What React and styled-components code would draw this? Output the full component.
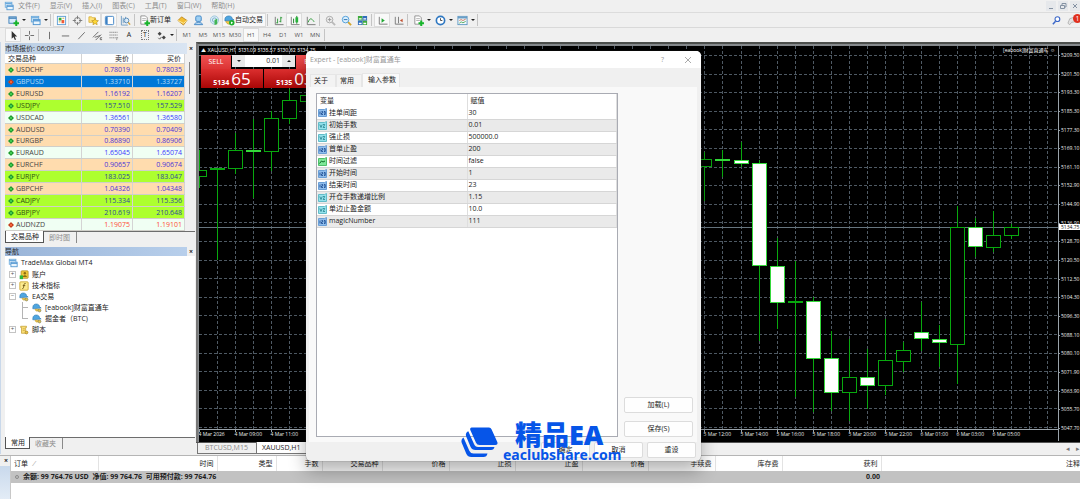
import styled, { createGlobalStyle, css } from "styled-components";

const menus = ["文件(F)", "显示(V)", "插入(I)", "图表(C)", "工具(T)", "窗口(W)", "帮助(H)"];

const timeframes = ["M1", "M5", "M15", "M30", "H1", "H4", "D1", "W1", "MN"];

const quotes = [
  { symbol: "USDCHF", bid: "0.78019", ask: "0.78035", tone: "peach" },
  { symbol: "GBPUSD", bid: "1.33710", ask: "1.33727", tone: "selected", down: true },
  { symbol: "EURUSD", bid: "1.16192", ask: "1.16207", tone: "peach" },
  { symbol: "USDJPY", bid: "157.510", ask: "157.529", tone: "lime" },
  { symbol: "USDCAD", bid: "1.36561", ask: "1.36580", tone: "mint" },
  { symbol: "AUDUSD", bid: "0.70390", ask: "0.70409", tone: "peach" },
  { symbol: "EURGBP", bid: "0.86890", ask: "0.86906", tone: "peach" },
  { symbol: "EURAUD", bid: "1.65045", ask: "1.65074", tone: "mint" },
  { symbol: "EURCHF", bid: "0.90657", ask: "0.90674", tone: "peach" },
  { symbol: "EURJPY", bid: "183.025", ask: "183.047", tone: "lime" },
  { symbol: "GBPCHF", bid: "1.04326", ask: "1.04348", tone: "peach" },
  { symbol: "CADJPY", bid: "115.334", ask: "115.356", tone: "lime" },
  { symbol: "GBPJPY", bid: "210.619", ask: "210.648", tone: "lime" },
  { symbol: "AUDNZD", bid: "1.19075", ask: "1.19101", tone: "falling", down: true },
];

const tones = {
  peach: { bg: "#ffdcae", text: "#3f3f3f", price: "#4a35d8" },
  selected: { bg: "#0078d7", text: "#b9dcf7", price: "#b9dcf7" },
  lime: { bg: "#adff2f", text: "#2e4f10", price: "#2c4a9a" },
  mint: { bg: "#f0fff3", text: "#454545", price: "#3a3aff" },
  falling: { bg: "#f0fff3", text: "#454545", price: "#ff4b33" },
};

const treeItems = [
  { label: "TradeMax Global MT4", icon: "windows", level: 0 },
  { label: "账户", icon: "account", level: 1, toggle: "+" },
  { label: "技术指标", icon: "indicator", level: 1, toggle: "+" },
  { label: "EA交易", icon: "expert", level: 1, toggle: "-" },
  { label: "[eabook]财富直通车", icon: "expert", level: 2 },
  { label: "掘金者（BTC)", icon: "expert", level: 2, last: true },
  { label: "脚本", icon: "script", level: 1, toggle: "+", last: true },
];

const params = [
  { name: "挂单间距", value: "30", type: "int" },
  { name: "初始手数", value: "0.01", type: "double" },
  { name: "强止损", value: "500000.0", type: "double" },
  { name: "首单止盈", value: "200", type: "int" },
  { name: "时间过滤", value: "false", type: "bool" },
  { name: "开始时间", value: "1", type: "int" },
  { name: "结束时间", value: "23", type: "int" },
  { name: "开仓手数递增比例", value: "1.15", type: "double" },
  { name: "单边止盈金额", value: "10.0", type: "double" },
  { name: "magicNumber", value: "111", type: "int" },
];

const orderColumns = [
  { label: "时间", width: 119 },
  { label: "类型", width: 59 },
  { label: "手数", width: 46 },
  { label: "交易品种", width: 60 },
  { label: "价格", width: 67 },
  { label: "止损", width: 66 },
  { label: "止盈", width: 67 },
  { label: "价格", width: 66 },
  { label: "手续费", width: 67 },
  { label: "库存费", width: 67 },
  { label: "获利", width: 99 },
];

const prices = [
  "5209.50", "5201.50", "5193.30", "5185.30", "5177.30", "5169.10", "5161.10",
  "5152.90", "5144.90", "5136.90", "5128.70", "5120.50", "5112.50", "5104.30",
  "5096.30", "5088.10", "5080.10", "5071.90", "5063.90", "5055.70", "5047.70",
];

const times = [
  [0, "4 Mar 2026"], [2, "4 Mar 09:00"], [4, "4 Mar 11:00"],
  [28, "5 Mar 12:00"], [30, "5 Mar 14:00"], [32, "5 Mar 16:00"],
  [34, "5 Mar 18:00"], [36, "5 Mar 20:00"], [38, "5 Mar 22:00"],
  [40, "6 Mar 01:00"], [42, "6 Mar 03:00"], [44, "6 Mar 05:00"],
];

// [bar index, wick top, body top, body bottom, wick bottom, filled]
const candles = [
  [0, 104, 124, 131, 142, 0],
  [1, 122, 122, 124, 214, 0],
  [2, 87, 104, 123, 128, 0],
  [3, 73, 104, 106, 152, 1],
  [4, 65, 72, 106, 125, 0],
  [5, 43, 54, 73, 78, 0],
  [6, 44, 49, 56, 62, 0],
  [28, 106, 113, 121, 155, 0],
  [29, 104, 113, 115, 131, 1],
  [30, 96, 114, 118, 121, 1],
  [31, 114, 117, 220, 295, 1],
  [32, 192, 220, 257, 283, 1],
  [33, 215, 255, 257, 351, 0],
  [34, 251, 255, 313, 366, 1],
  [35, 285, 312, 347, 365, 1],
  [36, 293, 331, 347, 375, 0],
  [37, 303, 331, 340, 363, 1],
  [38, 273, 314, 340, 349, 0],
  [39, 296, 304, 316, 326, 0],
  [40, 256, 286, 293, 305, 1],
  [41, 279, 293, 297, 321, 1],
  [42, 160, 181, 299, 338, 0],
  [43, 172, 181, 201, 211, 1],
  [44, 165, 189, 202, 206, 0],
  [45, 178, 181, 190, 193, 0],
];

const barX = (i) => Math.round(i * 18.05) + 0.5;

const plus = <path d="M9 6v6M6 9h6" stroke="#17b52a" strokeWidth="2.2" />;

const drawings = {
  windows: (
    <>
      <rect x="1.5" y="1.5" width="8" height="6" fill="#e9f5fd" stroke="#6aa9dc" />
      <path d="M1.5 3h8" stroke="#6aa9dc" strokeWidth="1.4" />
      <rect x="3.5" y="5" width="7.5" height="5.5" fill="#e9f5fd" stroke="#4c93d0" />
      <path d="M3.5 6.3h7.5" stroke="#4c93d0" strokeWidth="1.4" />
    </>
  ),
  newChart: (
    <>
      <rect x="1" y="2" width="8" height="7" fill="#d6eafa" stroke="#3f7fb8" />
      <path d="M1 3.4h8" stroke="#3f7fb8" strokeWidth="1.5" />
      {plus}
    </>
  ),
  market: (
    <>
      <rect x="1.5" y="1.5" width="9" height="9" fill="#fff" stroke="#5e9fd4" />
      <path d="M3 3h3v3H3z" fill="#2fae3a" />
      <path d="M6 5.5h3v3.5H6z" fill="#ef5a36" />
      <path d="M3 7.5h2M7 3.5h2" stroke="#c9a030" />
    </>
  ),
  target: (
    <>
      <circle cx="6" cy="6" r="3.3" fill="none" stroke="#777" />
      <path d="M6 .8v3.6M6 7.6v3.6M.8 6h3.6M7.6 6h3.6" stroke="#777" />
    </>
  ),
  star: (
    <>
      <path d="M1 2h3l1 1h3v5H1z" fill="#ffe27a" stroke="#d1a62b" strokeWidth=".8" />
      <path d="m7.7 3.6 1.1 2.3 2.6.3-1.9 1.8.5 2.6-2.3-1.3-2.3 1.3.5-2.6L4 6.2l2.6-.3z" fill="#ffd935" stroke="#b98f1b" strokeWidth=".7" />
    </>
  ),
  terminal: (
    <>
      <rect x="1.5" y="1.5" width="9" height="9" rx="1" fill="#fff" stroke="#3c81c4" />
      <path d="M2 2h2v8H2z" fill="#3c81c4" />
    </>
  ),
  tester: (
    <>
      <path d="M1.5 1v10h7M3.5 3v6M6 2v6" stroke="#6d9cc4" fill="none" />
      <circle cx="7" cy="6" r="2.6" fill="#d9ecfa" fillOpacity=".8" stroke="#5387b6" />
      <path d="m9 8 2 2.5" stroke="#cf9e34" strokeWidth="1.5" />
    </>
  ),
  order: (
    <>
      <path d="M2 1h5l2 2v7H2z" fill="#fff" stroke="#777" strokeWidth=".8" />
      <path d="M3.5 4h4M3.5 6h4" stroke="#999" strokeWidth=".8" />
      {plus}
    </>
  ),
  editor: (
    <>
      <path d="m1 6 4-4 6 4-4 5z" fill="#f2bd34" stroke="#b47c12" strokeWidth=".8" />
      <path d="m1 6 6 3 4-3" stroke="#fff0a8" fill="none" />
    </>
  ),
  person: (
    <>
      <rect x="3" y="1" width="6" height="6" rx="1.5" fill="#9ed0f4" stroke="#3f84c4" />
      <path d="M1.5 10.5c0-3 9-3 9 0z" fill="#c8e4f8" stroke="#3f84c4" />
    </>
  ),
  signal: (
    <>
      <circle cx="6" cy="5.5" r="4.5" fill="#d9ecf6" stroke="#9cc4dc" />
      <circle cx="6" cy="5.5" r="2.3" fill="none" stroke="#7fb0cc" />
      <path d="M6 5.5 9 4v6l-3 1z" fill="#42b553" />
    </>
  ),
  expert: (
    <>
      <path d="M1 5c0-5 8-5 8-.5L11 6 1 7z" fill="#4fa5df" stroke="#2677b0" strokeWidth=".7" />
      <path d="M3.5 7.5c1 3 4 3 5 0z" fill="#f3c944" stroke="#b08c22" strokeWidth=".6" />
      <circle cx="9" cy="9" r="1.7" fill="#e8c44a" stroke="#7b7b55" strokeWidth=".8" />
    </>
  ),
  autoTrade: (
    <>
      <path d="M1 4.5c0-4.500 8-4.500 8-.5l2 1.500L1 6.5z" fill="#4fa5df" stroke="#2677b0" strokeWidth=".7" />
      <path d="M2 7c1 4 6 4 7 0z" fill="#f3c944" stroke="#b08c22" strokeWidth=".6" />
      <circle cx="8.5" cy="8.5" r="3" fill="#1eaf2d" />
      <path d="M7.6 7v3L10 8.500z" fill="#fff" />
    </>
  ),
  bars: (
    <>
      <path d="M2.5 2v8.500h9" stroke="#777" fill="none" />
      <path d="M5 4v5M3.500 8.500H5M8.500 2v6M8.500 3H10M7 7h1.500" stroke="#2d9a38" fill="none" />
    </>
  ),
  candle: (
    <>
      <path d="M2.5 2v8.500h9" stroke="#777" fill="none" />
      <path d="M5 4v5M8.500 1v8.500" stroke="#157b22" />
      <path d="M7 2.500h3V8H7z" fill="#28b33b" />
    </>
  ),
  line: (
    <>
      <path d="M2.5 2v8.500h9" stroke="#777" fill="none" />
      <path d="M3.500 8c1.500-5 3.500-5 6.500-.5" stroke="#2d9a38" fill="none" />
    </>
  ),
  zoomIn: (
    <>
      <path d="m7.5 7.5 3.500 3.500" stroke="#b9b9b9" strokeWidth="2" />
      <circle cx="5" cy="5" r="3.600" fill="#eee" stroke="#a9a9a9" />
      <path d="M3 5h4M5 3v4" stroke="#999" />
    </>
  ),
  zoomOut: (
    <>
      <path d="m7.5 7.5 3.500 3.500" stroke="#d4a62c" strokeWidth="2" />
      <circle cx="5" cy="5" r="3.600" fill="#d9efff" stroke="#4d9bd6" />
      <path d="M3 5h4" stroke="#2a70ab" />
    </>
  ),
  tile: (
    <>
      <path d="M1 1h5v5H1zM6 6h5v5H6z" fill="#3eaa3c" />
      <path d="M6 1h5v5H6zM1 6h5v5H1z" fill="#2f6dbb" />
      <path d="M2 3.500h3v1.500H2zM7 3.500h3v1.500H7zM2 8.500h3V10H2zM7 8.500h3V10H7z" fill="#fff" />
    </>
  ),
  scroll: (
    <>
      <path d="M2.500 2v8h9" stroke="#777" fill="none" />
      <path d="M5 3.500v5L8.500 6z" fill="#22a834" />
    </>
  ),
  shift: (
    <>
      <path d="M2.500 2v8h9M6 2v7" stroke="#777" fill="none" />
      <path d="M10.500 4v4L7.500 6z" fill="#c2502f" />
    </>
  ),
  clock: (
    <>
      <circle cx="6" cy="6" r="4.500" fill="#fff" stroke="#2f78c2" strokeWidth="1.800" />
      <path d="M6 3.500V6h2" stroke="#444" fill="none" />
    </>
  ),
  template: (
    <>
      <rect x="1" y="1.500" width="10" height="9" fill="#f2f8fc" stroke="#5f97c2" />
      <path d="M1 3h10" stroke="#5f97c2" strokeWidth="1.500" />
      <path d="m2.500 6 2-1 2 1 3-1.500" stroke="#c2502f" fill="none" strokeWidth=".8" />
      <path d="m2.500 9 2-1.500 2 1 3-1.500" stroke="#2d9a38" fill="none" strokeWidth=".8" />
    </>
  ),
  cursor: <path d="M4 1v8.500l2-2 1.500 3.500 1.300-.6L7.300 7H10z" fill="#333" />,
  cross: <path d="M6 1v4M6 7v4M1 6h4M7 6h4" stroke="#666" />,
  vline: <path d="M6 2v8" stroke="#666" />,
  hline: <path d="M2 6.500h8" stroke="#666" />,
  trend: <path d="m2.500 10 7-7.500" stroke="#666" />,
  channel: (
    <>
      <path d="m1 8 6-6M4 11l6-6M3 8l6-2" stroke="#666" />
      <path d="M9 8.500h2M9 10.500h2M9 8.500v2" stroke="#666" />
    </>
  ),
  fib: <path d="M1.500 2.500h9M1.500 5.500h9M1.500 8.500h7M9.500 8v3M9.500 8.500H11" stroke="#888" strokeDasharray="1.500 .5" />,
  arrows: (
    <>
      <path d="m4 2 2.200 2.200L4 6.400 1.800 4.200z" fill="#444" />
      <path d="m8.500 6 2.200 2.200-2.200 2.200-2.200-2.200z" fill="#444" />
      <path d="m2.500 8.500 1.500 1.500 2-2.500" stroke="#555" fill="none" />
    </>
  ),
  account: (
    <>
      <rect x="2.500" y="1" width="8.500" height="9" rx="1" fill="#f0c83c" stroke="#a8841a" strokeWidth=".8" />
      <circle cx="7" cy="4" r="1.500" fill="#8d6d10" />
      <path d="M4.500 8.500c0-3 5-3 5 0z" fill="#8d6d10" />
      <path d="M.8 6.500h4v4.500h-4z" fill="#2cb83a" />
    </>
  ),
  indicator: (
    <>
      <rect x="1" y="1" width="10" height="10" rx="1" fill="#fbe98e" stroke="#c9a42f" />
      <path d="M8 3c-2-.5-2 1-2.300 3S5.500 9.500 4 9M4.500 5.500h3" stroke="#6b5312" fill="none" />
    </>
  ),
  script: (
    <>
      <path d="M2 1.500h7v1.500H8v5h1.500v2H3V3H2z" fill="#f9dd76" stroke="#be9727" strokeWidth=".8" />
      <path d="M4.500 4.500H7M4.500 6.500H7" stroke="#be9727" strokeWidth=".7" />
      <circle cx="9" cy="9" r="1.700" fill="#e8c44a" stroke="#a88220" strokeWidth=".8" />
    </>
  ),
  search: (
    <>
      <circle cx="7" cy="4.500" r="2.600" fill="#fff" stroke="#3b67c8" strokeWidth="1.200" />
      <path d="M5 6.800 2 10" stroke="#3b67c8" strokeWidth="1.600" />
    </>
  ),
  chat: <path d="m1 9 2-5 6-2 2 5-6 1-2 2.500z" fill="#e4e4e4" stroke="#a5a5a5" strokeWidth=".8" />,
};

function Icon({ name, size = 11 }) {
  return (
    <svg width={size} height={size} viewBox="0 0 12 12" fill="none" aria-hidden="true">
      {drawings[name]}
    </svg>
  );
}

function Tool({ icon, label, pressed, caret, children }) {
  return (
    <>
      <ToolButton type="button" aria-label={label} $pressed={pressed} $wide={Boolean(children)}>
        {icon && <Icon name={icon} />}
        {children}
      </ToolButton>
      {caret && <Caret aria-hidden="true" />}
    </>
  );
}

function Toolbars() {
  return (
    <header>
      <MenuBar>
        <Icon name="windows" size={10} />
        {menus.map((menu) => (
          <button type="button" key={menu}>{menu}</button>
        ))}
        <WindowControls>
          <button type="button" aria-label="最小化">
            <svg width="8" height="8"><path d="M2 6.500h4" stroke="#8592a3" /></svg>
          </button>
          <button type="button" aria-label="还原">
            <svg width="8" height="8" fill="none"><path d="M1.500 3.500h4v3h-4zM3 3V1.500h4V5H6" stroke="#8592a3" /></svg>
          </button>
          <button type="button" aria-label="关闭">
            <svg width="8" height="8"><path d="m2 2 4 4M6 2 2 6" stroke="#8592a3" /></svg>
          </button>
        </WindowControls>
      </MenuBar>
      <ToolRow>
        <Tool icon="newChart" label="新图表" caret />
        <Tool icon="windows" label="配置文件" caret />
        <Divider />
        <Tool icon="market" label="市场报价" pressed />
        <Tool icon="target" label="数据窗口" />
        <Tool icon="star" label="导航" pressed />
        <Tool icon="terminal" label="终端" pressed />
        <Tool icon="tester" label="策略测试" />
        <Divider />
        <Tool icon="order" label="新订单">新订单</Tool>
        <Tool icon="editor" label="编辑器" />
        <Tool icon="person" label="社区" />
        <Tool icon="signal" label="信号" />
        <Tool icon="autoTrade" label="自动交易" pressed>自动交易</Tool>
        <Divider />
        <Tool icon="bars" label="柱状图" />
        <Tool icon="candle" label="阴阳烛" pressed />
        <Tool icon="line" label="折线图" />
        <Divider />
        <Tool icon="zoomIn" label="放大" />
        <Tool icon="zoomOut" label="缩小" />
        <Tool icon="tile" label="平铺" />
        <Divider />
        <Tool icon="scroll" label="自动滚动" pressed />
        <Tool icon="shift" label="图表平移" />
        <Divider />
        <Tool icon="order" label="指标" caret />
        <Tool icon="clock" label="时段" caret />
        <Tool icon="template" label="模板" caret />
        <Divider />
        <ToolEnd>
          <Tool icon="search" label="搜索" />
          <Tool icon="chat" label="消息" />
          <Badge>1</Badge>
        </ToolEnd>
      </ToolRow>
      <ToolRow>
        <Tool icon="cursor" label="光标" pressed />
        <Tool icon="cross" label="十字线" />
        <Divider />
        <Tool icon="vline" label="垂直线" />
        <Tool icon="hline" label="水平线" />
        <Tool icon="trend" label="趋势线" />
        <Tool icon="channel" label="通道" />
        <Tool icon="fib" label="斐波那契" />
        <ToolButton type="button">A</ToolButton>
        <ToolButton type="button"><BoxedLetter>T</BoxedLetter></ToolButton>
        <Tool icon="arrows" label="箭头" caret />
        <Divider />
        {timeframes.map((frame) => (
          <ToolButton type="button" key={frame} $small $pressed={frame === "H1"}>{frame}</ToolButton>
        ))}
        <Divider />
      </ToolRow>
    </header>
  );
}

function MarketWatch() {
  return (
    <section>
      <PanelTitle $light>
        市场报价: 06:09:37
        <CloseButton type="button" aria-label="关闭">×</CloseButton>
      </PanelTitle>
      <QuoteArea>
        <QuoteTable>
          <colgroup>
            <col />
            <col width="51" />
            <col width="52" />
          </colgroup>
          <thead>
            <tr>
              <th>交易品种</th>
              <th>卖价</th>
              <th>买价</th>
            </tr>
          </thead>
          <tbody>
            {quotes.map((q) => (
              <QuoteRow key={q.symbol} $tone={tones[q.tone]}>
                <td>
                  <Marker $down={q.down} />
                  {q.symbol}
                </td>
                <td>{q.bid}</td>
                <td>{q.ask}</td>
              </QuoteRow>
            ))}
          </tbody>
        </QuoteTable>
        <ScrollTrack><ScrollThumb /></ScrollTrack>
      </QuoteArea>
      <TabStrip>
        <DockTab type="button" $active>交易品种</DockTab>
        <DockTab type="button">即时图</DockTab>
      </TabStrip>
    </section>
  );
}

function Navigator() {
  return (
    <section>
      <PanelTitle>
        导航
        <CloseButton type="button" aria-label="关闭">×</CloseButton>
      </PanelTitle>
      <Tree>
        {treeItems.map((item) => (
          <TreeItem key={item.label} $level={item.level}>
            {item.toggle && <Toggle type="button" aria-label={item.label}>{item.toggle === "+" ? "+" : "−"}</Toggle>}
            {item.level === 2 && <Branch $last={item.last} />}
            <Icon name={item.icon} size={10} />
            {item.label}
          </TreeItem>
        ))}
      </Tree>
      <TabStrip>
        <DockTab type="button" $active>常用</DockTab>
        <DockTab type="button">收藏夹</DockTab>
      </TabStrip>
    </section>
  );
}

function Chart() {
  return (
    <ChartFrame>
      <Plot>
        <svg width="100%" height="395" role="img" aria-label="XAUUSD,H1">
          <g stroke="#4f5a64" strokeDasharray="3 2">
            {prices.map((p, i) => (
              <line key={p} x1="0" x2="100%" y1={Math.round(9 + i * 18.6) + 0.5} y2={Math.round(9 + i * 18.6) + 0.5} />
            ))}
            {Array.from({ length: 47 }, (_, i) => (
              <line key={i} x1={barX(i + 1)} x2={barX(i + 1)} y1="0" y2="383" />
            ))}
          </g>
          <path d="M0 383.500h2000" stroke="#9aa3aa" />
          <path d="M0 181.500h2000" stroke="#66757f" />
          {candles.map(([i, high, top, bottom, low, filled]) => (
            <g key={i} stroke={filled ? "#35d83b" : "#08a80e"}>
              <line x1={barX(i)} x2={barX(i)} y1={high} y2={low} stroke="#08a80e" />
              <rect
                x={barX(i) - 7}
                y={top + 0.5}
                width="14"
                height={bottom - top - 1}
                fill={filled ? "#fff" : "#000"}
              />
            </g>
          ))}
          {times.map(([i, label]) => (
            <g key={label}>
              <path d={`M${barX(i)} 383v3`} stroke="#9aa3aa" />
              <TimeText x={barX(i) - 1} y="390">{label}</TimeText>
            </g>
          ))}
        </svg>
        <ChartHeading>▲ XAUUSD,H1&nbsp; 5131.09 5135.57 5130.62 5134.75</ChartHeading>
        <ExpertName>[eabook]财富直通车 ☺</ExpertName>
        <TradePanel>
          <TradeTop>
            <TradeButton type="button">SELL</TradeButton>
            <Lots>
              <button type="button" aria-label="减少"><Caret /></button>
              <input aria-label="手数" defaultValue="0.01" />
              <button type="button" aria-label="增加"><Caret $up /></button>
            </Lots>
            <TradeButton type="button">BUY</TradeButton>
          </TradeTop>
          <TradePrices>
            <TradePrice><b>5134</b>65</TradePrice>
            <TradePrice><b>5135</b>03</TradePrice>
          </TradePrices>
        </TradePanel>
      </Plot>
      <PriceAxis>
        {prices.map((p) => <span key={p}>{p}</span>)}
        <CurrentPrice>5134.75</CurrentPrice>
      </PriceAxis>
    </ChartFrame>
  );
}

function Terminal() {
  return (
    <TerminalDock>
      <TerminalSide>
        <CloseButton type="button" aria-label="关闭">×</CloseButton>
      </TerminalSide>
      <OrderTable>
        <colgroup>
          <col width="87" />
          {orderColumns.map((c, i) => <col key={i} width={c.width} />)}
          <col />
        </colgroup>
        <thead>
          <tr>
            <th>订单 <i>⁄</i></th>
            {orderColumns.map((c, i) => <th key={i}>{c.label}</th>)}
            <th>注释</th>
          </tr>
        </thead>
        <tbody>
          <tr>
            <td colSpan="11">
              <Dot />
              余额: 99 764.76 USD&nbsp; 净值: 99 764.76&nbsp; 可用预付款: 99 764.76
            </td>
            <td>0.00</td>
            <td />
          </tr>
        </tbody>
      </OrderTable>
    </TerminalDock>
  );
}

const typeIcons = {
  int: { bg: "#8fbdec", edge: "#6a9fd6", ink: "#12428a" },
  double: { bg: "#95e2ec", edge: "#62bcc8", ink: "#14727f" },
  bool: { bg: "#7fe898", edge: "#4fbf6a", ink: "#0e6c27" },
};

function TypeIcon({ type }) {
  const t = typeIcons[type];
  return (
    <svg width="9" height="9" viewBox="0 0 9 9" fill="none" aria-hidden="true">
      <path d="M.5 1.500h6l2-1v8h-8z" fill={t.bg} stroke={t.edge} />
      {type === "bool" && <path d="m1.500 6.500 2-2.500 1.500 1 2-1" stroke={t.ink} />}
      {type === "int" && <path d="M2 3.500v3M3.500 3.500h1.200v1.500H3.500v1.500h1.500M6 3.500h1.200v3H6M6 5h1.200" stroke={t.ink} strokeWidth=".8" />}
      {type === "double" && <path d="m1.800 3.500 1.200 3L4.200 3.500M5 3.500h1.700l-1.500 3H7" stroke={t.ink} strokeWidth=".7" />}
    </svg>
  );
}

function ExpertDialog() {
  return (
    <Dialog role="dialog" aria-label="Expert">
      <DialogTitle>
        Expert - [eabook]财富直通车
        <span>
          <button type="button" aria-label="帮助">?</button>
          <button type="button" aria-label="关闭">
            <svg width="8" height="8"><path d="m1 1 6 6M7 1 1 7" stroke="#aaa" /></svg>
          </button>
        </span>
      </DialogTitle>
      <DialogTabs role="tablist">
        <DialogTab type="button" role="tab">关于</DialogTab>
        <DialogTab type="button" role="tab">常用</DialogTab>
        <DialogTab type="button" role="tab" $active>输入参数</DialogTab>
      </DialogTabs>
      <DialogBody>
        <ParamFrame>
          <ParamTable>
            <colgroup>
              <col width="150" />
              <col />
            </colgroup>
            <thead>
              <tr>
                <th>变量</th>
                <th>赋值</th>
              </tr>
            </thead>
            <tbody>
              {params.map((p) => (
                <tr key={p.name}>
                  <td>
                    <Cell>
                      <TypeIcon type={p.type} />
                      {p.name}
                    </Cell>
                  </td>
                  <td>{p.value}</td>
                </tr>
              ))}
            </tbody>
          </ParamTable>
        </ParamFrame>
        <SideButtons>
          <PushButton type="button">加载(L)</PushButton>
          <PushButton type="button">保存(S)</PushButton>
        </SideButtons>
      </DialogBody>
      <DialogFooter>
        <PushButton type="button">确定</PushButton>
        <PushButton type="button">取消</PushButton>
        <PushButton type="button">重设</PushButton>
      </DialogFooter>
      <Watermark>
        <svg width="37" height="32" viewBox="0 0 37 32" aria-hidden="true">
          <g fill="#0655e8">
            <path d="M10.500.5H28q1.800 0 2.500 1.700L36.300 15q1 3-1.800 3H18.500q-2.500 0-3.500-2.300L9.300 3Q8.700 1 10.500.5z" />
            <path d="M7.300 4.200 13 17q1.200 3 4 3h16.500q-.7 3-3.500 3H14.500q-3.500 0-5-3.300L5 9q-.8-3.300 2.300-4.800z" />
            <path d="M2.500 10.500 8.300 23.700q1.200 2.800 4.200 2.800h14q-.7 3.500-4 3.500H10.300q-3.500 0-5-3.300L.8 16q-1.300-3.500 1.700-5.500z" />
          </g>
        </svg>
        <div>
          <strong>精品EA</strong>
          <span>eaclubshare.com</span>
        </div>
      </Watermark>
    </Dialog>
  );
}

export default function App() {
  return (
    <>
      <GlobalStyle />
      <Page>
        <Toolbars />
        <Workspace>
          <LeftDock>
            <MarketWatch />
            <Navigator />
          </LeftDock>
          <ChartArea>
            <Chart />
            <ChartTabs>
              <ChartTab type="button">BTCUSD,M15</ChartTab>
              <ChartTab type="button" $active>XAUUSD,H1</ChartTab>
              <ChartScroll>
                <button type="button" aria-label="向左">◂</button>
                <button type="button" aria-label="向右">▸</button>
              </ChartScroll>
            </ChartTabs>
          </ChartArea>
        </Workspace>
        <Terminal />
        <ExpertDialog />
      </Page>
    </>
  );
}

const GlobalStyle = createGlobalStyle`
  * {
    box-sizing: border-box;
  }

  body {
    margin: 0;
    background: #f0f0f0;
    color: #222;
    font-family: "Open Sans", "Noto Sans CJK SC", sans-serif;
    font-size: 7px;
    line-height: 10px;
  }

  button,
  input {
    margin: 0;
    padding: 0;
    border: 0;
    background: none;
    color: inherit;
    font: inherit;
  }

  svg {
    display: block;
    flex: none;
  }

  table {
    border-collapse: collapse;
    table-layout: fixed;
  }

  th,
  td {
    padding: 0;
    font-weight: 400;
    white-space: nowrap;
    overflow: hidden;
  }
`;

const Page = styled.div`
  position: relative;
  display: flex;
  flex-direction: column;
  min-height: 100vh;
  overflow: hidden;
`;

const MenuBar = styled.nav`
  display: flex;
  align-items: center;
  gap: 10px;
  height: 13px;
  padding-left: 4px;
  border-bottom: 1px solid #dcdcdc;
  color: #8e8e8e;

  > svg {
    margin-right: -6px;
  }
`;

const WindowControls = styled.div`
  display: flex;
  gap: 2px;
  margin-left: auto;

  button {
    padding: 1px;
    background: #e6e8eb;
  }
`;

const ToolRow = styled.div`
  display: flex;
  align-items: stretch;
  height: 15px;
  padding-left: 5px;
  border-bottom: 1px solid #d9d9d9;

  & + & {
    height: 14px;
    border-bottom: 0;
  }
`;

const ToolButton = styled.button`
  display: flex;
  align-items: center;
  justify-content: center;
  width: ${({ $wide }) => ($wide ? "auto" : "16px")};
  padding: ${({ $wide }) => ($wide ? "0 3px 0 2px" : "0")};
  color: ${({ $small }) => ($small ? "#555" : "#222")};
  font-size: ${({ $small }) => ($small ? "6px" : "7px")};

  ${({ $pressed }) =>
    $pressed &&
    css`
      background: #f9f9f9;
      box-shadow: inset 0 0 0 1px #dcdcdc;
    `}
`;

const Divider = styled.i`
  width: 1px;
  margin: 1px 2px 1px 1px;
  background: #c4c4c4;
`;

const Caret = styled.i`
  align-self: center;
  margin: 0 1px;
  border: 2px solid transparent;
  border-top-color: #222;
  border-bottom-width: 0;

  ${({ $up }) =>
    $up &&
    css`
      border-width: 0 2px 2px;
      border-bottom-color: #222;
    `}
`;

const BoxedLetter = styled.span`
  width: 8px;
  border: 1px dotted #777;
  line-height: 8px;
`;

const ToolEnd = styled.div`
  position: relative;
  display: flex;
  margin-left: auto;
`;

const Badge = styled.span`
  position: absolute;
  top: 1px;
  right: -2px;
  width: 9px;
  border-radius: 5px;
  background: #e0301e;
  color: #fff;
  line-height: 9px;
  text-align: center;
`;

const Workspace = styled.main`
  display: flex;
  padding-bottom: 1px;
`;

const LeftDock = styled.aside`
  display: flex;
  flex-direction: column;
  gap: 4px;
  flex: none;
  width: 196px;
  padding: 1px 1px 0 4px;
  border-left: 1px solid #c9d8ea;
`;

const PanelTitle = styled.h2`
  display: flex;
  justify-content: space-between;
  margin: 0;
  background: ${({ $light }) =>
    $light ? "linear-gradient(90deg, #b9cde4, #dbe6f3)" : "linear-gradient(90deg, #99b4d8, #b9d0ec)"};
  color: #2b2b2b;
  font-size: 7px;
  font-weight: 400;
  line-height: ${({ $light }) => ($light ? "11px" : "9px")};
`;

const CloseButton = styled.button`
  width: 8px;
  background: #f0f0f0;
  color: #222;
  font-weight: 700;
`;

const QuoteArea = styled.div`
  display: flex;
  background: #f0f0f0;
`;

const QuoteTable = styled.table`
  flex: 1;
  height: 177px;
  background: #fff;

  th,
  td {
    padding: 0 2px 0 0;
    border-right: 1px solid #d4d4d4;
    border-bottom: 1px solid #d0cfc9;
    line-height: 9px;
    text-align: right;
  }

  th {
    padding-right: 3px;
  }

  th:first-child,
  td:first-child {
    padding-left: 3px;
    text-align: left;
  }
`;

const QuoteRow = styled.tr`
  background: ${({ $tone }) => $tone.bg};
  color: ${({ $tone }) => $tone.text};

  td + td {
    color: ${({ $tone }) => $tone.price};
  }
`;

const Marker = styled.i`
  display: inline-block;
  width: 4px;
  height: 4px;
  margin: 0 3px 0 1px;
  border: 1px solid ${({ $down }) => ($down ? "#b8381c" : "#1d8d2a")};
  background: ${({ $down }) => ($down ? "#ff6a3c" : "#43d653")};
  transform: rotate(45deg);
`;

const ScrollTrack = styled.div`
  width: 10px;
  padding: 8px 4px;
`;

const ScrollThumb = styled.div`
  width: 1px;
  height: 32px;
  background: #858585;
`;

const TabStrip = styled.div`
  display: flex;
  height: 12px;
  border-top: 1px solid #6d6d6d;
`;

const DockTab = styled.button`
  padding: 0 6px 0 5px;
  border-right: 1px solid #8a8a8a;
  color: #8b8b8b;

  ${({ $active }) =>
    $active &&
    css`
      margin: -1px 0 0;
      padding: 0 4px 0 5px;
      border: 1px solid #555;
      border-top: 0;
      background: #fff;
      color: #222;
    `}
`;

const Tree = styled.ul`
  height: 181px;
  margin: 0;
  padding: 1px 3px;
  background: #fff;
  list-style: none;
`;

const TreeItem = styled.li`
  display: flex;
  align-items: center;
  gap: 3px;
  height: ${({ $level }) => ($level === 0 ? "12px" : "11px")};
  padding-left: ${({ $level }) => ($level === 2 ? "14px" : $level === 1 ? "1px" : "0")};
`;

const Toggle = styled.button`
  width: 5px;
  height: 5px;
  margin: 0 1px;
  outline: 1px solid #c4c4c4;
  color: #555;
  font-size: 6px;
  line-height: 5px;
`;

const Branch = styled.i`
  width: 7px;
  height: 11px;
  background: linear-gradient(#b4b4b4, #b4b4b4) 0 5px / 6px 1px no-repeat,
    linear-gradient(#b4b4b4, #b4b4b4) 0 0 / 1px ${({ $last }) => ($last ? "6px" : "11px")} no-repeat;
`;

const ChartArea = styled.section`
  flex: 1;
  min-width: 0;
`;

const ChartFrame = styled.div`
  display: flex;
  border-top: 2px solid #4c4f4c;
  border-left: 2px solid #777;
  background: #000;
  box-shadow: inset 1px 2px 0 #85898c;
  padding: 2px 0 1px 1px;
`;

const Plot = styled.div`
  position: relative;
  flex: 1;
  min-width: 0;
  overflow: hidden;
`;

const TimeText = styled.text`
  fill: #eee;
  font-size: 5px;
`;

const ChartHeading = styled.div`
  position: absolute;
  top: 0;
  left: 2px;
  color: #f0f0f0;
  font-family: Inter, "Open Sans", sans-serif;
  font-size: 5px;
  line-height: 8px;
`;

const ExpertName = styled.div`
  position: absolute;
  top: 0;
  right: 3px;
  color: #fff;
  font-size: 5px;
  line-height: 8px;
`;

const TradePanel = styled.div`
  position: absolute;
  top: 9px;
  left: 2px;
  width: 125px;
  color: #fff;
`;

const TradeTop = styled.div`
  display: flex;
  justify-content: space-between;
  height: 14px;
`;

const TradeButton = styled.button`
  width: 30px;
  background: linear-gradient(#f05252, #dc3434);
`;

const Lots = styled.div`
  display: flex;
  width: 63px;
  height: 12px;
  background: #e8e8e8;

  button {
    display: flex;
    justify-content: center;
    width: 13px;
  }

  input {
    flex: 1;
    min-width: 0;
    padding-right: 2px;
    background: #fff;
    color: #333;
    text-align: right;
  }
`;

const TradePrices = styled.div`
  display: flex;
  gap: 1px;
`;

const TradePrice = styled.div`
  display: flex;
  flex: 1;
  align-items: baseline;
  justify-content: center;
  height: 19px;
  background: linear-gradient(#dc2f2f, #a90606);
  font-size: 17px;
  line-height: 19px;

  b {
    margin-right: 2px;
    font-size: 7px;
  }
`;

const PriceAxis = styled.div`
  position: relative;
  display: flex;
  flex: none;
  flex-direction: column;
  justify-content: space-between;
  width: 22px;
  padding: 5px 0 9px;
  border-left: 1px solid #9aa3aa;
  color: #eee;
  font-size: 5px;
  line-height: 8px;
  overflow: hidden;

  > span {
    padding-left: 2px;
    background: linear-gradient(#9aa3aa, #9aa3aa) 0 4px / 1px 1px no-repeat;
  }
`;

const CurrentPrice = styled.strong`
  position: absolute;
  top: 178px;
  left: 0;
  width: 100%;
  padding-left: 2px;
  background: #fff;
  color: #111;
  font-weight: 400;
  line-height: 6px;
`;

const ChartTabs = styled.div`
  display: flex;
  height: 12px;
  padding-left: 1px;
  border-top: 1px solid #555;
`;

const ChartTab = styled.button`
  padding: 0 8px 0 7px;
  border: 1px solid #777;
  border-top: 0;
  color: #8a8a8a;

  ${({ $active }) =>
    $active &&
    css`
      margin: -1px 0 0 -1px;
      padding: 0 5px;
      background: #fff;
      color: #222;
    `}
`;

const ChartScroll = styled.div`
  display: flex;
  gap: 6px;
  margin-left: auto;
  color: #777;
`;

const TerminalDock = styled.footer`
  display: flex;
  flex: 1;
  border-top: 1px solid #b5b5b5;
`;

const TerminalSide = styled.div`
  flex: none;
  width: 11px;
  padding-left: 2px;
  border-right: 1px solid #c8c8c8;
  background: linear-gradient(#f0f0f0 10px, #c9d9ec 10px, #e3ecf6);
`;

const OrderTable = styled.table`
  flex: 1;
  align-self: stretch;
  min-width: 0;
  background: #fff;

  thead tr {
    height: 15px;
  }

  th {
    padding-right: 3px;
    border-right: 1px solid #e3e3e3;
    text-align: right;
  }

  th:last-child {
    padding: 0;
    border: 0;
  }

  th:first-child,
  td:first-child {
    padding-left: 3px;
    text-align: left;
  }

  th i {
    margin-left: 4px;
    color: #999;
  }

  tbody {
    vertical-align: top;
  }

  td {
    padding-right: 1px;
    background: linear-gradient(#c2c2c2 12px, #fff 12px);
    color: #1c1c1c;
    font-weight: 700;
    line-height: 12px;
    text-align: right;
  }
`;

const Dot = styled.i`
  display: inline-block;
  width: 4px;
  height: 4px;
  margin: 0 4px 0 1px;
  border: 1px solid #8a8a8a;
  border-radius: 50%;
`;

const Dialog = styled.div`
  position: absolute;
  top: 51px;
  left: 306px;
  width: 395px;
  border-radius: 5px;
  background: #f0f0f0;
  box-shadow: 0 10px 18px rgba(0, 0, 0, 0.3), 0 0 1px #555;
`;

const DialogTitle = styled.h1`
  display: flex;
  align-items: center;
  justify-content: space-between;
  height: 17px;
  margin: 0;
  padding: 0 9px 0 4px;
  border-radius: 5px 5px 0 0;
  background: #fff;
  color: #999;
  font-size: 7px;
  font-weight: 400;

  span {
    display: flex;
    align-items: center;
    gap: 20px;
  }
`;

const DialogTabs = styled.div`
  display: flex;
  align-items: flex-end;
  padding: 5px 5px 0 4px;
`;

const DialogTab = styled.button`
  height: 13px;
  padding: 0 7px 0 3px;
  border: 1px solid #e6e6e6;
  border-bottom: 0;
  background: #f3f3f3;

  ${({ $active }) =>
    $active &&
    css`
      height: 14px;
      padding: 0 3px 2px 5px;
      background: #f9f9f9;
    `}
`;

const DialogBody = styled.div`
  display: flex;
  gap: 6px;
  margin: 0 4px 0 3px;
  padding: 6px 4px 5px 7px;
  background: #f9f9f9;
`;

const ParamFrame = styled.div`
  flex: 1;
  height: 344px;
  border: 1px solid #a9abb3;
  background: #fff;
`;

const ParamTable = styled.table`
  width: 100%;

  tr {
    height: 12px;
  }

  thead tr {
    height: 13px;
  }

  th,
  td {
    padding-left: 1px;
    border-right: 1px solid #dedede;
    text-align: left;
  }

  th {
    padding: 0 3px;
  }

  td {
    border-bottom: 1px solid #d6d6d6;
  }

  tbody tr:nth-child(even) {
    background: #eaeaea;
  }
`;

const Cell = styled.div`
  display: flex;
  align-items: center;
  gap: 2px;
`;

const SideButtons = styled.div`
  display: flex;
  flex-direction: column;
  justify-content: flex-end;
  gap: 8px;
  width: 69px;
`;

const PushButton = styled.button`
  height: 16px;
  border: 1px solid #dcdcdc;
  border-radius: 2px;
  background: #fefefe;
`;

const DialogFooter = styled.div`
  display: flex;
  justify-content: flex-end;
  gap: 4px;
  padding: 0 5px 3px;

  ${PushButton} {
    width: 49px;
  }
`;

const Watermark = styled.div`
  position: absolute;
  bottom: 0;
  left: 155px;
  display: flex;
  gap: 5px;
  color: #0655e8;
  font-weight: 700;
  pointer-events: none;

  svg {
    margin-top: 5px;
  }

  strong,
  span {
    display: block;
    font-family: "Noto Sans", "Noto Sans CJK SC", sans-serif;
  }

  strong {
    padding-left: 12px;
    font-size: 27px;
    line-height: 26px;
  }

  span {
    font-size: 14px;
    line-height: 13px;
  }
`;
